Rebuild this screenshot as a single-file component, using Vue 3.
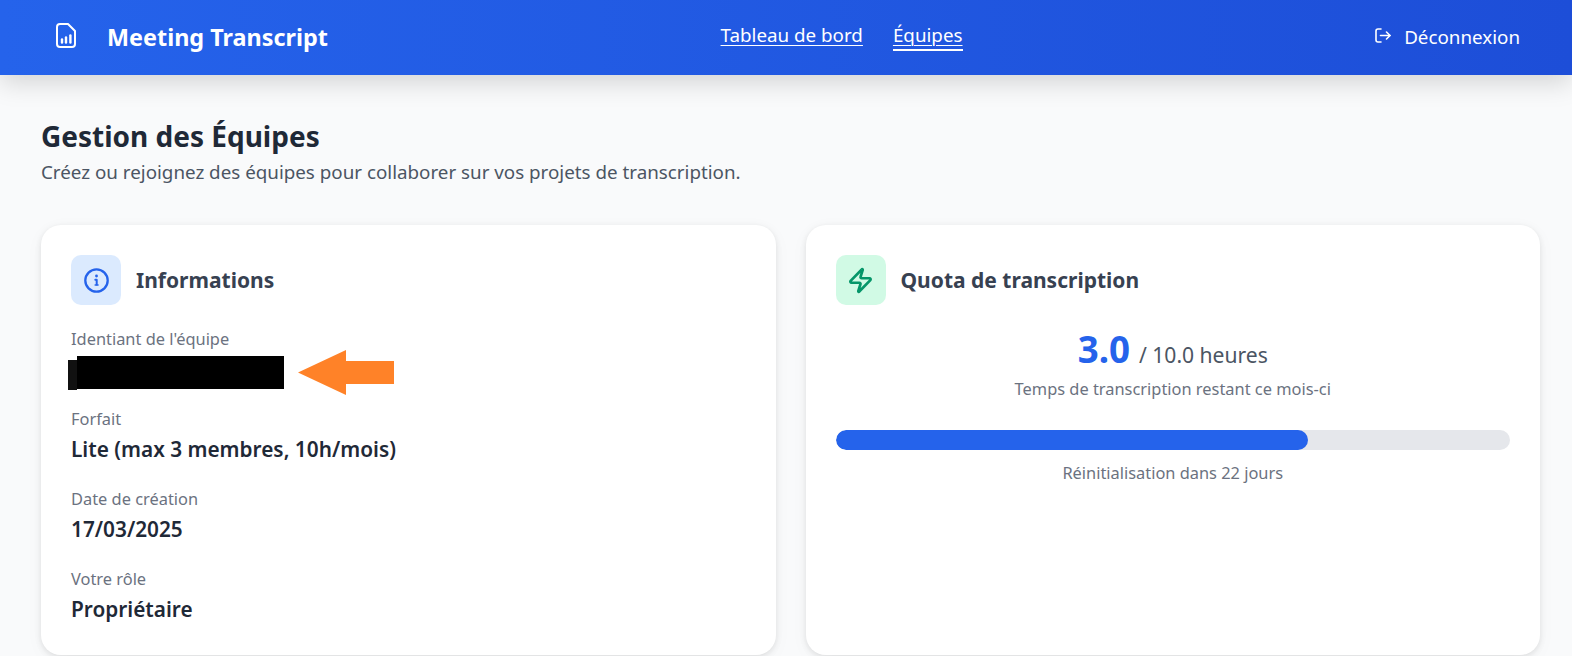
<script setup>
const infos = [
  { label: "Forfait", value: "Lite (max 3 membres, 10h/mois)" },
  { label: "Date de création", value: "17/03/2025" },
  { label: "Votre rôle", value: "Propriétaire" },
];
const usedPercent = 70;
</script>

<template>
  <div class="page">
    <header class="topbar">
      <div class="brand">
        <svg class="brand-icon" viewBox="0 0 20 25" fill="none" stroke="currentColor" stroke-width="2" stroke-linecap="round" stroke-linejoin="round">
          <path d="M4 1H12L19 8V21a3 3 0 0 1-3 3H4a3 3 0 0 1-3-3V4a3 3 0 0 1 3-3Z" />
          <path d="M6 19.5V16.5" stroke-width="2.4" />
          <path d="M10 19.5V14.5" stroke-width="2.4" />
          <path d="M14.4 19.5V12.5" stroke-width="2.4" />
        </svg>
        <span class="brand-name">Meeting Transcript</span>
      </div>
      <nav class="nav">
        <a class="nav-link">Tableau de bord</a>
        <a class="nav-link active">Équipes</a>
      </nav>
      <a class="logout">
        <svg class="logout-icon" viewBox="0 0 16 15" fill="none" stroke="currentColor" stroke-width="1.6" stroke-linecap="round" stroke-linejoin="round">
          <path d="M6 1H3a2 2 0 0 0-2 2v9a2 2 0 0 0 2 2h3" />
          <path d="M5.5 7.5H15" />
          <path d="M11.5 4L15 7.5L11.5 11" />
        </svg>
        Déconnexion
      </a>
    </header>

    <main class="content">
      <h1 class="title">Gestion des Équipes</h1>
      <p class="subtitle">Créez ou rejoignez des équipes pour collaborer sur vos projets de transcription.</p>

      <div class="cards">
        <section class="card">
          <div class="card-head">
            <div class="icon-box blue">
              <svg viewBox="0 0 25 25" fill="none" stroke="currentColor" stroke-width="2.3" stroke-linecap="round" stroke-linejoin="round">
                <circle cx="12.5" cy="12.5" r="11.2" />
                <path d="M12.5 8h.01" stroke-width="2.8" />
                <path d="M11.3 11.7h1.4v4.9" stroke-width="2" />
                <path d="M11.2 17h2.8" stroke-width="1.6" />
              </svg>
            </div>
            <h2 class="card-title">Informations</h2>
          </div>

          <div class="info">
            <div class="info-label">Identiant de l'équipe</div>
            <div class="redacted-row">
              <div class="redacted"></div>
              <svg class="arrow" viewBox="0 0 96 45">
                <polygon points="0,22.5 48,0 48,11 96,11 96,34 48,34 48,45" fill="#ff8228" />
              </svg>
            </div>
          </div>
          <div v-for="info in infos" :key="info.label" class="info">
            <div class="info-label">{{ info.label }}</div>
            <div class="info-value">{{ info.value }}</div>
          </div>
        </section>

        <section class="card">
          <div class="card-head">
            <div class="icon-box green">
              <svg viewBox="0 0 24 24" fill="none" stroke="currentColor" stroke-width="2.4" stroke-linecap="round" stroke-linejoin="round">
                <path d="M4 14a1 1 0 0 1-.78-1.63l9.9-10.2a.5.5 0 0 1 .86.46l-1.92 6.02A1 1 0 0 0 13 10h7a1 1 0 0 1 .78 1.63l-9.9 10.2a.5.5 0 0 1-.86-.46l1.92-6.02A1 1 0 0 0 11 14z" />
              </svg>
            </div>
            <h2 class="card-title">Quota de transcription</h2>
          </div>

          <div class="quota">
            <div class="quota-line">
              <span class="quota-num">3.0</span>
              <span class="quota-total">/ 10.0 heures</span>
            </div>
            <p class="quota-note">Temps de transcription restant ce mois-ci</p>
            <div class="bar">
              <div class="bar-fill" :style="{ width: usedPercent + '%' }"></div>
            </div>
            <p class="quota-reset">Réinitialisation dans 22 jours</p>
          </div>
        </section>
      </div>
    </main>
  </div>
</template>

<style>
html,
body {
  margin: 0;
  overflow: hidden;
  background: #f9fafb;
}
</style>

<style scoped>
.page {
  height: 656px;
  overflow: hidden;
  font-family: "Noto Sans", "Open Sans", sans-serif;
  background: #f9fafb;
  color: #1f2937;
}

.topbar {
  height: 75px;
  box-sizing: border-box;
  padding: 0 52px 0 56px;
  display: flex;
  justify-content: space-between;
  align-items: center;
  background: linear-gradient(90deg, #2563eb, #1d4ed8);
  color: #fff;
  box-shadow: 0 8px 24px rgba(0, 0, 0, 0.15);
  position: relative;
}

.brand {
  display: flex;
  align-items: center;
  gap: 31px;
}

.brand-icon {
  width: 20px;
  height: 25px;
  margin-top: -5px;
}

.brand-name {
  font-size: 23.4px;
  font-weight: 700;
  margin-top: -2px;
}

.nav {
  display: flex;
  gap: 30px;
  font-size: 18.8px;
  margin-top: -2px;
  margin-right: 20px;
}

.nav-link {
  text-decoration: underline;
  text-underline-offset: 3px;
  text-decoration-thickness: 1px;
  padding-bottom: 1px;
}

.nav-link.active {
  border-bottom: 2px solid #fff;
}

.logout {
  display: flex;
  align-items: center;
  gap: 13px;
  font-size: 18.8px;
  margin-top: -2px;
}

.logout-icon {
  width: 16px;
  height: 15px;
  margin-top: -3px;
}

.content {
  padding: 43px 32px 0 41px;
}

.title {
  margin: 0;
  font-size: 28px;
  line-height: 36px;
  font-weight: 700;
  color: #1f2937;
}

.subtitle {
  margin: 4px 0 0;
  font-size: 18.8px;
  line-height: 28px;
  color: #4b5563;
}

.cards {
  display: grid;
  grid-template-columns: 1fr 1fr;
  gap: 30px;
  margin-top: 39px;
}

.card {
  height: 430px;
  box-sizing: border-box;
  padding: 30px;
  background: #fff;
  border-radius: 20px;
  box-shadow: 0 2px 6px rgba(0, 0, 0, 0.1), 0 4px 20px rgba(0, 0, 0, 0.03);
}

.card-head {
  display: flex;
  align-items: center;
  gap: 15px;
}

.icon-box {
  width: 50px;
  height: 50px;
  border-radius: 10px;
  display: flex;
  align-items: center;
  justify-content: center;
}

.icon-box svg {
  width: 27px;
  height: 27px;
}

.icon-box.blue svg {
  width: 25px;
  height: 25px;
}

.icon-box.blue {
  background: #dbeafe;
  color: #2563eb;
}

.icon-box.green {
  background: #d1fae5;
  color: #059669;
}

.card-title {
  margin: 0;
  font-size: 21px;
  font-weight: 700;
  color: #374151;
}

.info {
  margin-top: 22px;
}

.info-label {
  font-size: 16.4px;
  line-height: 24px;
  margin-bottom: 2px;
  color: #6b7280;
}

.info-value {
  font-size: 20.8px;
  line-height: 32px;
  font-weight: 600;
  color: #1f2937;
}

.redacted-row {
  position: relative;
  height: 32px;
}

.redacted {
  position: absolute;
  left: -3px;
  top: 3px;
  width: 216px;
  height: 34px;
  background: linear-gradient(90deg, #111 9px, #000 9px);
  clip-path: polygon(0 4px, 9px 4px, 9px 0, 100% 0, 100% 33px, 9px 33px, 9px 34px, 0 34px);
}

.arrow {
  position: absolute;
  left: 227px;
  top: -3px;
  width: 96px;
  height: 45px;
}

.quota {
  margin-top: 20px;
  text-align: center;
}

.quota-line {
  display: flex;
  justify-content: center;
  align-items: baseline;
  gap: 9px;
  line-height: 48px;
}

.quota-num {
  font-size: 36.7px;
  font-weight: 700;
  color: #2563eb;
}

.quota-total {
  font-size: 21.1px;
  color: #4b5563;
}

.quota-note {
  margin: -2px 0 0;
  font-size: 16.4px;
  line-height: 24px;
  color: #6b7280;
}

.bar {
  margin-top: 29px;
  height: 20px;
  border-radius: 10px;
  background: #e5e7eb;
  overflow: hidden;
}

.bar-fill {
  height: 100%;
  border-radius: 10px;
  background: #2563eb;
}

.quota-reset {
  margin: 11px 0 0;
  font-size: 16.4px;
  line-height: 24px;
  color: #6b7280;
}
</style>
